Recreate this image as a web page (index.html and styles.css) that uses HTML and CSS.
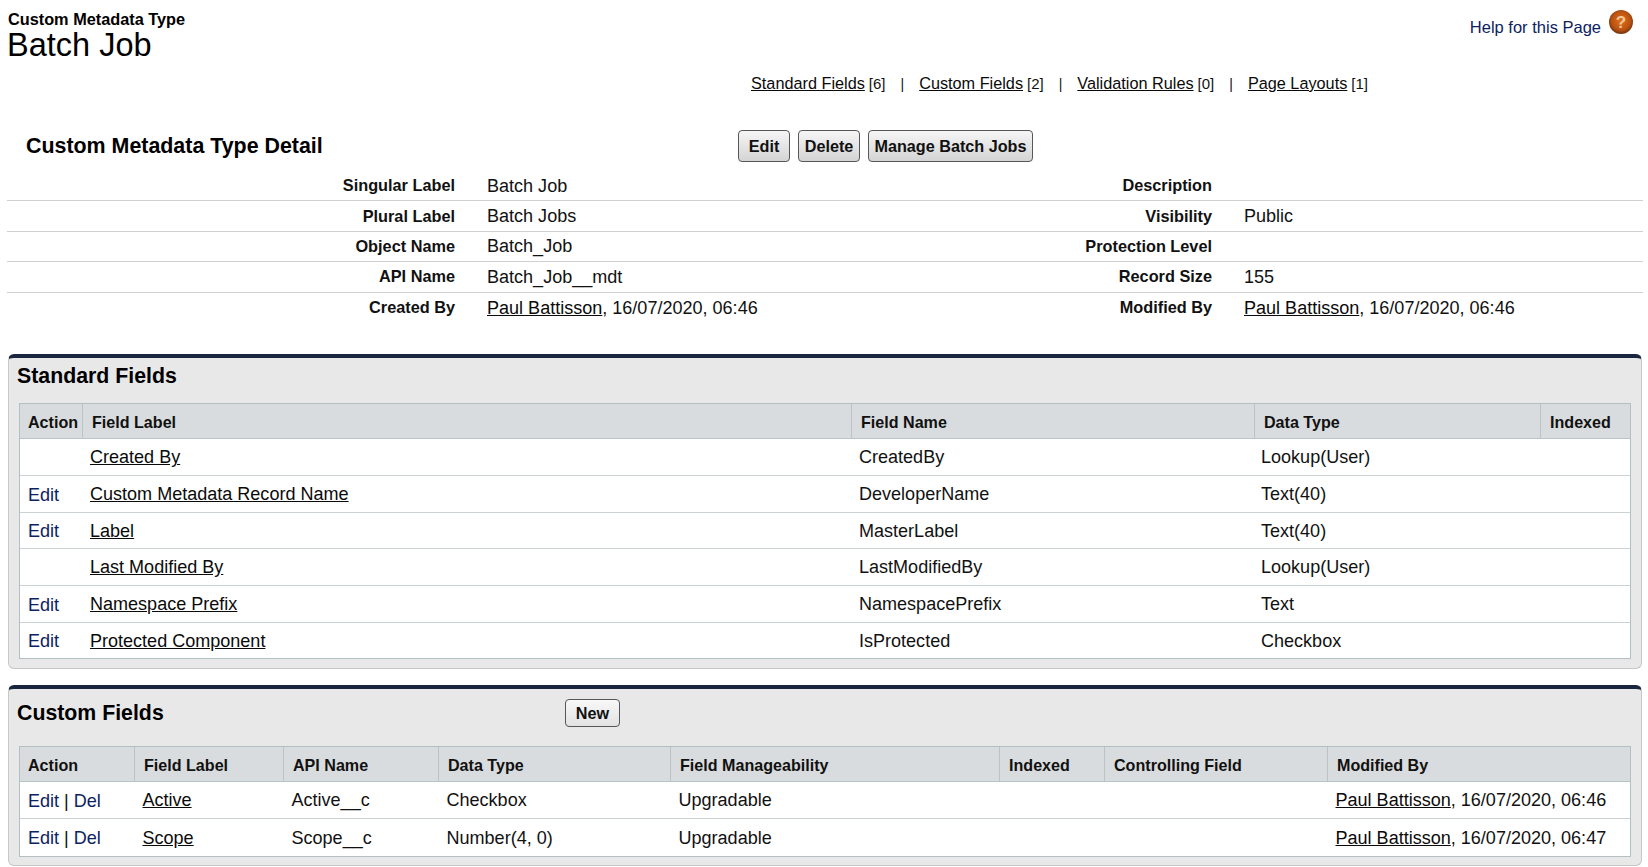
FILE: index.html
```html
<!DOCTYPE html>
<html lang="en">
<head>
    <meta charset="UTF-8">
    <title>Batch Job</title>
    <link rel="stylesheet" href="styles.css">
</head>
<body>
    <div class="page-head">
        <div>
            <div class="page-type">Custom Metadata Type</div>
            <h1 class="page-title">Batch Job</h1>
        </div>
        <a class="help" href="#">
            <span>Help for this Page</span>
            <svg class="help-icon" width="24" height="24" viewBox="0 0 24 24">
                <defs>
                    <radialGradient id="helpBg" cx="50%" cy="45%" r="55%">
                        <stop offset="0%" stop-color="#e0701a"/>
                        <stop offset="70%" stop-color="#bb5210"/>
                        <stop offset="100%" stop-color="#6e3510"/>
                    </radialGradient>
                </defs>
                <circle cx="12" cy="12" r="12" fill="url(#helpBg)"/>
                <text x="12" y="18" text-anchor="middle" class="help-mark">?</text>
            </svg>
        </a>
    </div>

    <div class="related">
        <a href="#">Standard Fields</a><span class="count">[6]</span>
        <span class="sep">|</span>
        <a href="#">Custom Fields</a><span class="count">[2]</span>
        <span class="sep">|</span>
        <a href="#">Validation Rules</a><span class="count">[0]</span>
        <span class="sep">|</span>
        <a href="#">Page Layouts</a><span class="count">[1]</span>
    </div>

    <div class="detail-head">
        <h2 class="detail-title">Custom Metadata Type Detail</h2>
        <div class="buttons">
            <button class="btn btn-edit">Edit</button>
            <button class="btn btn-delete">Delete</button>
            <button class="btn btn-manage">Manage Batch Jobs</button>
        </div>
    </div>

    <div class="detail-list">
        <div class="detail-row">
            <div class="label">Singular Label</div><div class="value">Batch Job</div>
            <div class="label">Description</div><div class="value"></div>
        </div>
        <div class="detail-row">
            <div class="label">Plural Label</div><div class="value">Batch Jobs</div>
            <div class="label">Visibility</div><div class="value">Public</div>
        </div>
        <div class="detail-row">
            <div class="label">Object Name</div><div class="value">Batch_Job</div>
            <div class="label">Protection Level</div><div class="value"></div>
        </div>
        <div class="detail-row">
            <div class="label">API Name</div><div class="value">Batch_Job__mdt</div>
            <div class="label">Record Size</div><div class="value">155</div>
        </div>
        <div class="detail-row last">
            <div class="label">Created By</div><div class="value"><a href="#">Paul Battisson</a>, 16/07/2020, 06:46</div>
            <div class="label">Modified By</div><div class="value"><a href="#">Paul Battisson</a>, 16/07/2020, 06:46</div>
        </div>
    </div>

    <div class="panel panel-standard">
        <div class="panel-head">
            <h3 class="panel-title">Standard Fields</h3>
        </div>
        <table class="grid">
            <colgroup>
                <col class="w63"><col class="w769"><col class="w403"><col class="w286"><col class="w89">
            </colgroup>
            <tr>
                <th>Action</th><th>Field Label</th><th>Field Name</th><th>Data Type</th><th>Indexed</th>
            </tr>
            <tr>
                <td></td><td><a href="#">Created By</a></td><td>CreatedBy</td><td>Lookup(User)</td><td></td>
            </tr>
            <tr>
                <td><a class="action" href="#">Edit</a></td><td><a href="#">Custom Metadata Record Name</a></td><td>DeveloperName</td><td>Text(40)</td><td></td>
            </tr>
            <tr>
                <td><a class="action" href="#">Edit</a></td><td><a href="#">Label</a></td><td>MasterLabel</td><td>Text(40)</td><td></td>
            </tr>
            <tr>
                <td></td><td><a href="#">Last Modified By</a></td><td>LastModifiedBy</td><td>Lookup(User)</td><td></td>
            </tr>
            <tr>
                <td><a class="action" href="#">Edit</a></td><td><a href="#">Namespace Prefix</a></td><td>NamespacePrefix</td><td>Text</td><td></td>
            </tr>
            <tr>
                <td><a class="action" href="#">Edit</a></td><td><a href="#">Protected Component</a></td><td>IsProtected</td><td>Checkbox</td><td></td>
            </tr>
        </table>
    </div>

    <div class="panel panel-custom">
        <div class="panel-head">
            <h3 class="panel-title">Custom Fields</h3>
            <button class="btn btn-new">New</button>
        </div>
        <table class="grid">
            <colgroup>
                <col class="w115"><col class="w149"><col class="w155"><col class="w232"><col class="w329"><col class="w105"><col class="w223"><col class="w302">
            </colgroup>
            <tr>
                <th>Action</th><th>Field Label</th><th>API Name</th><th>Data Type</th><th>Field Manageability</th><th>Indexed</th><th>Controlling Field</th><th>Modified By</th>
            </tr>
            <tr>
                <td><a class="action" href="#">Edit</a> | <a class="action" href="#">Del</a></td><td><a href="#">Active</a></td><td>Active__c</td><td>Checkbox</td><td>Upgradable</td><td></td><td></td><td><a href="#">Paul Battisson</a>, 16/07/2020, 06:46</td>
            </tr>
            <tr>
                <td><a class="action" href="#">Edit</a> | <a class="action" href="#">Del</a></td><td><a href="#">Scope</a></td><td>Scope__c</td><td>Number(4, 0)</td><td>Upgradable</td><td></td><td></td><td><a href="#">Paul Battisson</a>, 16/07/2020, 06:47</td>
            </tr>
        </table>
    </div>
</body>
</html>
```

FILE: styles.css
```css
html, body {
    margin: 0;
    background-color: #ffffff;
}

body {
    font-family: "Liberation Sans", Arial, sans-serif;
    font-size: 18.05px;
    color: #111111;
    height: 867px;
    overflow: hidden;
}

a {
    color: #0a0a0a;
}

.page-head {
    display: flex;
    justify-content: space-between;
    height: 70px;
    padding: 10px 15px 0 7px;
    box-sizing: border-box;
}

.page-type {
    font-size: 16.3px;
    font-weight: bold;
    line-height: 18px;
    padding-left: 1px;
    color: #000000;
}

.page-title {
    margin: 0;
    font-size: 32.5px;
    font-weight: normal;
    line-height: 34px;
    color: #000000;
}

.help {
    display: flex;
    align-items: flex-start;
    gap: 8px;
    color: #0d2260;
    text-decoration: none;
    font-size: 16.5px;
    line-height: 34px;
}

.help-icon {
    display: block;
}

.help-mark {
    font-family: "Liberation Sans", Arial, sans-serif;
    font-size: 17px;
    font-weight: bold;
    fill: #f3c79a;
}

.related {
    display: flex;
    align-items: baseline;
    height: 26px;
    padding-left: 751px;
    font-size: 16.25px;
    line-height: 26px;
}

.count {
    font-size: 15px;
    margin-left: 4px;
}

.sep {
    font-size: 14px;
    margin: 0 15px;
}

.detail-head {
    display: flex;
    align-items: center;
    height: 32px;
    margin-top: 34px;
    padding-left: 26px;
}

.detail-title {
    margin: 0;
    width: 712px;
    font-size: 21.4px;
    font-weight: bold;
    color: #000000;
}

.buttons {
    display: flex;
    gap: 8px;
}

.btn {
    height: 32px;
    padding: 0;
    border: 1px solid #55575a;
    border-radius: 4px;
    background: linear-gradient(#f6f6f6, #d4d4d4);
    font-family: "Liberation Sans", Arial, sans-serif;
    font-size: 16.2px;
    font-weight: bold;
    color: #111111;
}

.btn-edit {
    width: 52px;
}

.btn-delete {
    width: 62px;
}

.btn-manage {
    width: 165px;
}

.btn-new {
    width: 55px;
    height: 28px;
    background: linear-gradient(#f8f8f8, #e2e2e2);
}

.detail-list {
    margin: 9px 5px 0 7px;
}

.detail-row {
    display: grid;
    grid-template-columns: 448px 480px 277px 1fr;
    align-items: center;
    height: 30.4px;
    box-sizing: border-box;
    border-bottom: 1px solid #cfd2d3;
}

.detail-row.last {
    border-bottom: none;
}

.label {
    text-align: right;
    font-size: 16.3px;
    font-weight: bold;
    color: #111111;
}

.value {
    padding: 1px 0 0 32px;
}

.panel {
    width: 1634px;
    margin-left: 8px;
    box-sizing: border-box;
    padding: 0 10px 10px;
    background-color: #e8e8e8;
    border: 1px solid #c4c8c9;
    border-top: 4px solid #1a2540;
    border-radius: 6px;
}

.panel-standard {
    margin-top: 31px;
    height: 315px;
}

.panel-custom {
    margin-top: 16px;
    height: 181px;
}

.panel-head {
    display: flex;
    align-items: center;
    box-sizing: border-box;
}

.panel-standard .panel-head {
    height: 45px;
    padding-bottom: 8px;
}

.panel-custom .panel-head {
    height: 57px;
    padding-bottom: 8px;
}

.panel-title {
    margin: 0 0 0 -2px;
    font-size: 21.3px;
    font-weight: bold;
    color: #000000;
}

.panel-custom .panel-title {
    width: 548px;
}

.grid {
    width: 100%;
    table-layout: fixed;
    border-collapse: separate;
    border-spacing: 0;
    background-color: #ffffff;
    border: 1px solid #b4bfc1;
}

.grid th {
    height: 35px;
    box-sizing: border-box;
    padding: 3px 0 0 9px;
    text-align: left;
    font-size: 16.1px;
    font-weight: bold;
    color: #111111;
    background-color: #d9dcde;
    border-right: 1px solid #b9c4c6;
    border-bottom: 1px solid #b9c4c6;
    white-space: nowrap;
}

.grid th:last-child {
    border-right: none;
}

.grid td {
    height: 37px;
    box-sizing: border-box;
    padding: 2px 0 0 7.5px;
    border-bottom: 1px solid #cdd3d4;
    white-space: nowrap;
}

.panel-standard .grid td {
    padding-left: 7px;
}

.panel-standard .grid td:nth-child(4) {
    padding-left: 6px;
}

.panel-standard .grid tr:nth-child(4) td {
    height: 36px;
}

.panel-standard .grid tr:last-child td {
    height: 35px;
}

.grid tr:last-child td {
    border-bottom: none;
}

.grid th:first-child,
.grid td:first-child,
.panel-standard .grid td:first-child {
    padding-left: 8px;
}

.grid td:first-child {
    padding-top: 3px;
}

.action {
    color: #0d2260;
    text-decoration: none;
}

.w63 { width: 63px; }
.w89 { width: 89px; }
.w105 { width: 105px; }
.w115 { width: 115px; }
.w149 { width: 149px; }
.w155 { width: 155px; }
.w223 { width: 223px; }
.w232 { width: 232px; }
.w286 { width: 286px; }
.w302 { width: 302px; }
.w329 { width: 329px; }
.w403 { width: 403px; }
.w769 { width: 769px; }
```
